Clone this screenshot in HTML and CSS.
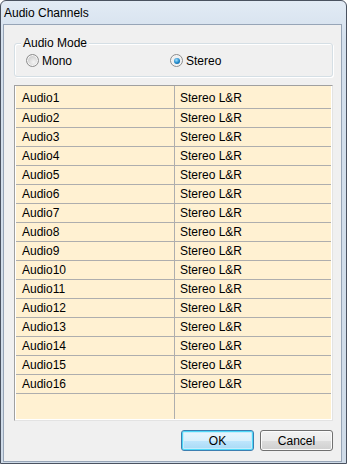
FILE: index.html
```html
<!DOCTYPE html>
<html>
<head>
<meta charset="utf-8">
<link rel="stylesheet" href="styles.css">
</head>
<body>
<div class="window">
  <div class="titlebar">Audio Channels</div>
  <div class="client">
    <div class="group">
      <div class="group-label">Audio Mode</div>
      <div class="radios">
        <div class="opt opt-mono"><span class="radio"></span>Mono</div>
        <div class="opt"><span class="radio checked"></span>Stereo</div>
      </div>
    </div>
    <div class="grid">
      <div class="row first"><div class="c1">Audio1</div><div class="c2">Stereo L&amp;R</div></div>
      <div class="row"><div class="c1">Audio2</div><div class="c2">Stereo L&amp;R</div></div>
      <div class="row"><div class="c1">Audio3</div><div class="c2">Stereo L&amp;R</div></div>
      <div class="row"><div class="c1">Audio4</div><div class="c2">Stereo L&amp;R</div></div>
      <div class="row"><div class="c1">Audio5</div><div class="c2">Stereo L&amp;R</div></div>
      <div class="row"><div class="c1">Audio6</div><div class="c2">Stereo L&amp;R</div></div>
      <div class="row"><div class="c1">Audio7</div><div class="c2">Stereo L&amp;R</div></div>
      <div class="row"><div class="c1">Audio8</div><div class="c2">Stereo L&amp;R</div></div>
      <div class="row"><div class="c1">Audio9</div><div class="c2">Stereo L&amp;R</div></div>
      <div class="row"><div class="c1">Audio10</div><div class="c2">Stereo L&amp;R</div></div>
      <div class="row"><div class="c1">Audio11</div><div class="c2">Stereo L&amp;R</div></div>
      <div class="row"><div class="c1">Audio12</div><div class="c2">Stereo L&amp;R</div></div>
      <div class="row"><div class="c1">Audio13</div><div class="c2">Stereo L&amp;R</div></div>
      <div class="row"><div class="c1">Audio14</div><div class="c2">Stereo L&amp;R</div></div>
      <div class="row"><div class="c1">Audio15</div><div class="c2">Stereo L&amp;R</div></div>
      <div class="row"><div class="c1">Audio16</div><div class="c2">Stereo L&amp;R</div></div>
      <div class="row filler"><div class="c1"></div><div class="c2"></div></div>
    </div>
    <div class="buttons">
      <button class="btn btn-default">OK</button>
      <button class="btn">Cancel</button>
    </div>
  </div>
</div>
</body>
</html>
```

FILE: styles.css
```css
html, body {
  margin: 0;
  padding: 0;
  background: #ffffff;
}
body {
  font-family: "Liberation Sans", Arial, sans-serif;
  font-size: 12px;
  color: #000;
}
.window {
  box-sizing: border-box;
  width: 347px;
  height: 464px;
  border: 1px solid #4a5260;
  border-radius: 6px 6px 0 0;
  background: linear-gradient(#e2ebf5, #d3dfec 40px, #cfdbe8);
  display: flex;
  flex-direction: column;
}
.titlebar {
  height: 23px;
  line-height: 24px;
  padding-left: 3px;
  flex: none;
}
.client {
  flex: 1;
  margin: 0 4px 1px 2px;
  border: 1px solid #97a5b7;
  background: #f0f0f0;
  padding: 0 8px 0 10px;
  display: flex;
  flex-direction: column;
}
.group {
  margin-top: 18px;
  height: 34px;
  box-sizing: border-box;
  border: 1px solid #d5dfe5;
  border-radius: 3px;
  box-shadow: inset 1px 1px 0 #fff, 1px 1px 0 #fff;
  flex: none;
}
.group-label {
  width: fit-content;
  height: 12px;
  margin: -7px 0 0 6px;
  padding: 0 2px;
  background: #f0f0f0;
  line-height: 12px;
}
.radios {
  display: flex;
  align-items: center;
  height: 17px;
  margin-top: 3px;
  padding-left: 11px;
}
.opt {
  display: flex;
  align-items: center;
  gap: 3px;
}
.opt-mono {
  width: 144px;
}
.radio {
  box-sizing: border-box;
  width: 13px;
  height: 13px;
  border-radius: 50%;
  border: 1px solid #8d8d8d;
  background: radial-gradient(circle at 60% 65%, #f4f4f4 0, #d8d8d8 50%, #bdbdbd 100%);
  box-shadow: inset 0 0 0 1px #f6f6f6;
  position: relative;
  flex: none;
}
.radio.checked {
  background: radial-gradient(circle, #f4f4f4 0, #e8e8e8 100%);
}
.radio.checked::after {
  content: "";
  position: absolute;
  left: 2.5px;
  top: 2.5px;
  width: 6px;
  height: 6px;
  border-radius: 50%;
  background: radial-gradient(circle at 40% 35%, #9fe0ff 0, #1c86c8 55%, #0f4f86 100%);
}
.grid {
  margin-top: 8px;
  height: 336px;
  flex: none;
  box-sizing: border-box;
  border: 1px solid #a0a0a0;
  border-right-color: #e3e3e3;
  border-bottom-color: #e3e3e3;
  background: #fff;
  padding: 0 1px 1px 1px;
  display: flex;
  flex-direction: column;
}
.row {
  display: flex;
  height: 19px;
  flex: none;
  background: #fff1d2;
  border-bottom: 1px solid #aeaeae;
  box-sizing: border-box;
  line-height: 15px;
  padding-top: 2px;
}
.row .c1 {
  margin-top: -2px;
  padding-top: 2px;
}
.row.first {
  height: 23px;
  padding-top: 5px;
}
.row.first .c1 {
  margin-top: -5px;
  padding-top: 5px;
}
.row.filler {
  flex: 1;
  border-bottom: none;
}
.c1 {
  width: 159px;
  flex: none;
  padding-left: 6px;
  border-right: 1px solid #aeaeae;
  box-sizing: border-box;
}
.c2 {
  flex: 1;
  padding-left: 5px;
}
.buttons {
  display: flex;
  justify-content: flex-end;
  gap: 6px;
  margin-top: 9px;
}
.btn {
  box-sizing: border-box;
  width: 73px;
  height: 21px;
  font-family: "Liberation Sans", Arial, sans-serif;
  font-size: 12px;
  color: #000;
  border: 1px solid #707070;
  border-radius: 3px;
  background: linear-gradient(#f2f2f2 0, #ebebeb 50%, #dddddd 51%, #cfcfcf 100%);
  box-shadow: inset 0 0 0 1px #fbfbfb;
  padding: 0;
}
.btn-default {
  border-color: #3c7fb1;
  background: linear-gradient(#eaf6fd 0, #d9f0fc 50%, #bee6fd 51%, #a7d9f5 100%);
  box-shadow: inset 0 0 0 1px #4ed8f8, inset 0 0 0 2px #c6ecfb;
}
```
